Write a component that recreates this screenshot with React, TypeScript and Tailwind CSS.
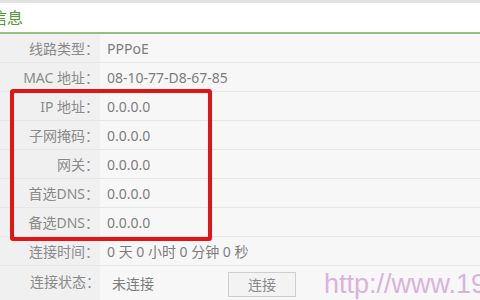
const rows: Array<{ label: string; value: string }> = [
  { label: '线路类型：', value: 'PPPoE' },
  { label: 'MAC 地址：', value: '08-10-77-D8-67-85' },
  { label: 'IP 地址：', value: '0.0.0.0' },
  { label: '子网掩码：', value: '0.0.0.0' },
  { label: '网关：', value: '0.0.0.0' },
  { label: '首选DNS：', value: '0.0.0.0' },
  { label: '备选DNS：', value: '0.0.0.0' },
  { label: '连接时间：', value: '0 天 0 小时 0 分钟 0 秒' },
];

const font = "font-['Noto_Sans','Noto_Sans_CJK_SC',sans-serif]";

export default function App() {
  return (
    <div className={`relative w-[480px] h-[300px] overflow-hidden bg-[#f7f7f7] ${font}`}>
      {/* 标题栏 */}
      <div className="h-[34px] bg-white border-t-[3px] border-[#e2e2e2] border-b-2 border-b-[#97bf84] flex items-center">
        <span className="ml-[-9px] text-[16px] text-[#4f9a34] leading-none">信息</span>
      </div>

      {rows.map((r) => (
        <div key={r.label} className="flex h-[29px] border-b border-[#e6e6e6]">
          <div className="w-[100px] shrink-0 bg-[#f0f0f0] flex items-center justify-end text-[14px] text-[#8a8a8a] pr-[1px]">
            {r.label}
          </div>
          <div className="flex-1 flex items-center pl-[7px] text-[14px] text-[#7d7d7d] whitespace-nowrap">
            {r.value}
          </div>
        </div>
      ))}

      {/* 连接状态 */}
      <div className="flex h-[36px]">
        <div className="w-[100px] shrink-0 bg-[#f0f0f0] flex items-center justify-end text-[14px] text-[#8a8a8a] pb-[6px]">
          连接状态：
        </div>
        <div className="flex-1 flex items-start pt-[6px] whitespace-nowrap">
          <span className="ml-[12px] w-[116px] text-[14px] text-[#7d7d7d] leading-[24px]">未连接</span>
          <button className="w-[68px] h-[25px] border border-[#cfcfcf] bg-[#f3f3f3] text-[14px] text-[#8a8a8a] leading-none">
            连接
          </button>
          <span className="ml-[28px] font-['Liberation_Sans',sans-serif] text-[27px] leading-[25px] text-[#d9b3dd]">
            http://www.192ly.com
          </span>
        </div>
      </div>

      {/* 红框标注 */}
      <div className="absolute left-[10px] top-[89px] w-[202px] h-[152px] border-4 border-[#e01616] rounded-[3px]" />
    </div>
  );
}
